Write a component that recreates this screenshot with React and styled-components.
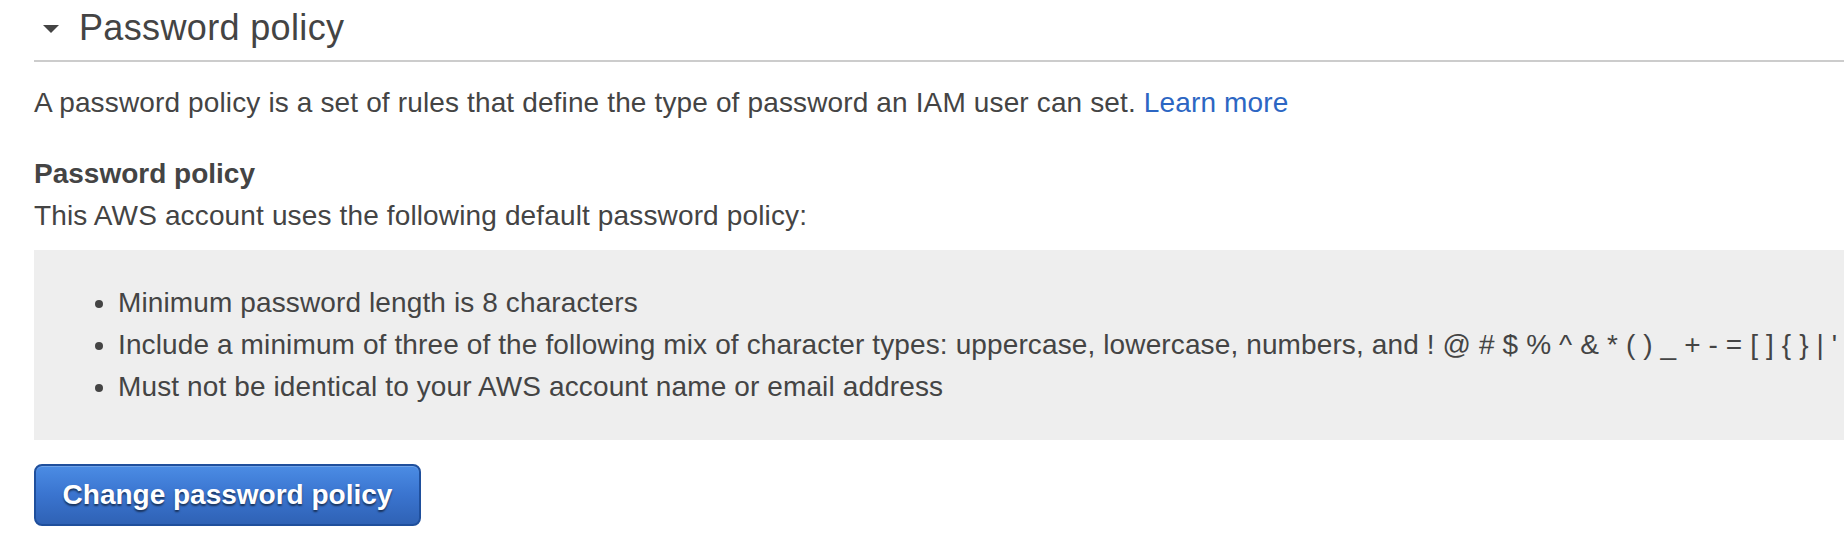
import styled, { createGlobalStyle } from "styled-components";

const GlobalStyle = createGlobalStyle`
  * {
    box-sizing: border-box;
  }
  body {
    margin: 0;
    background: #ffffff;
    font-family: "Liberation Sans", Arial, sans-serif;
    color: #444444;
    overflow: hidden;
  }
`;

const StyledSection = styled.section`
  padding-left: 34px;
  height: 548px;
  overflow: hidden;
`;

const SectionHeader = styled.div`
  display: flex;
  align-items: center;
  gap: 20px;
  height: 62px;
  padding: 0 0 4px 9px;
  border-bottom: 2px solid #cccccc;

  h2 {
    margin: 0;
    font-size: 36px;
    font-weight: 400;
    letter-spacing: 0.35px;
    color: #444444;
  }
`;

const Caret = styled.span`
  width: 0;
  height: 0;
  border-left: 8px solid transparent;
  border-right: 8px solid transparent;
  border-top: 8px solid #444444;
  margin-top: 2px;
`;

const Intro = styled.p`
  margin: 20px 0 0;
  font-size: 28px;
  line-height: 42px;
  letter-spacing: 0.14px;

  a {
    color: #2c66c3;
    text-decoration: none;
  }
`;

const PolicyBlock = styled.div`
  margin-top: 29px;
  font-size: 28px;
  line-height: 42px;
  letter-spacing: 0.14px;

  h3 {
    margin: 0;
    font-size: 28px;
    font-weight: 700;
    line-height: 42px;
    letter-spacing: 0;
  }
  p {
    margin: 0;
  }
`;

const RuleBox = styled.div`
  margin-top: 13px;
  background-color: #eeeeee;
  padding: 32px 0;
  overflow: hidden;
`;

const RuleList = styled.ul`
  margin: 0;
  padding-left: 84px;
  list-style: disc;
  font-size: 28px;
  line-height: 42px;
  letter-spacing: 0.12px;
  white-space: nowrap;
`;

const ChangeButton = styled.button`
  display: block;
  margin-top: 24px;
  width: 387px;
  height: 62px;
  border: 2px solid #1f4f9c;
  border-radius: 8px;
  background: linear-gradient(to bottom, #4b8ce4 0%, #3a74cf 50%, #2f62b5 100%);
  color: #ffffff;
  font-family: "Liberation Sans", Arial, sans-serif;
  font-size: 28px;
  font-weight: 700;
  text-shadow: 0 2px 2px rgba(0, 0, 0, 0.55);
  box-shadow: inset 0 1px 0 rgba(255, 255, 255, 0.2);
  cursor: pointer;
`;

const rules = [
  "Minimum password length is 8 characters",
  "Include a minimum of three of the following mix of character types: uppercase, lowercase, numbers, and ! @ # $ % ^ & * ( ) _ + - = [ ] { } | '",
  "Must not be identical to your AWS account name or email address",
];

function App() {
  return (
    <>
      <GlobalStyle />
      <StyledSection>
        <SectionHeader>
          <Caret />
          <h2>Password policy</h2>
        </SectionHeader>
        <Intro>
          A password policy is a set of rules that define the type of password
          an IAM user can set. <a href="#learn">Learn more</a>
        </Intro>
        <PolicyBlock>
          <h3>Password policy</h3>
          <p>This AWS account uses the following default password policy:</p>
        </PolicyBlock>
        <RuleBox>
          <RuleList>
            {rules.map((rule) => (
              <li key={rule}>{rule}</li>
            ))}
          </RuleList>
        </RuleBox>
        <ChangeButton>Change password policy</ChangeButton>
      </StyledSection>
    </>
  );
}

export default App;
